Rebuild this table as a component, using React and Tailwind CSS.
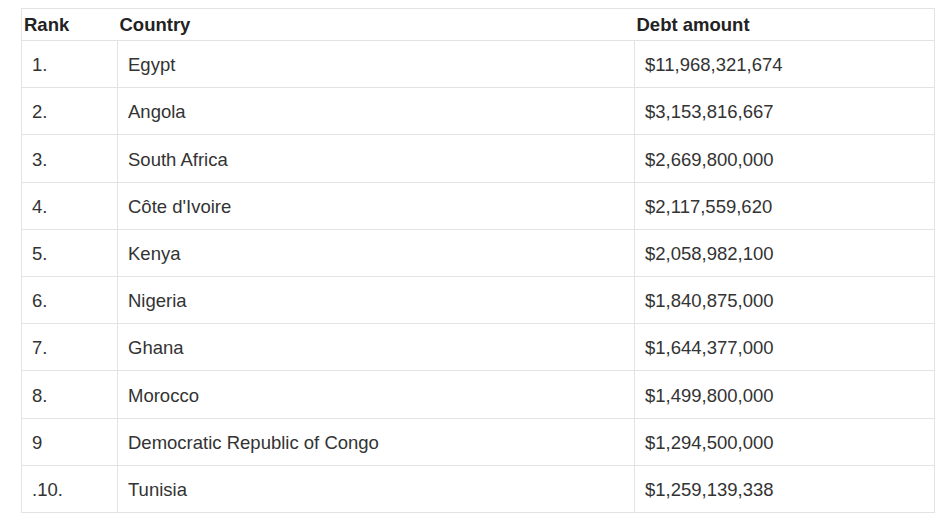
import React from "react";

const rows = [
  ["1.", "Egypt", "$11,968,321,674"],
  ["2.", "Angola", "$3,153,816,667"],
  ["3.", "South Africa", "$2,669,800,000"],
  ["4.", "Côte d'Ivoire", "$2,117,559,620"],
  ["5.", "Kenya", "$2,058,982,100"],
  ["6.", "Nigeria", "$1,840,875,000"],
  ["7.", "Ghana", "$1,644,377,000"],
  ["8.", "Morocco", "$1,499,800,000"],
  ["9", "Democratic Republic of Congo", "$1,294,500,000"],
  [".10.", "Tunisia", "$1,259,139,338"],
];

export default function App() {
  return (
    <div
      className="min-h-[517px] w-[940px] bg-white pl-[21px] pt-[8px] text-[18.5px] text-[#333]"
      style={{ fontFamily: '"Liberation Sans", Arial, sans-serif' }}
    >
      <table className="w-[914px] table-fixed border-collapse border border-[#e3e3e3]">
        <colgroup>
          <col className="w-[96px]" />
          <col className="w-[517px]" />
          <col />
        </colgroup>
        <thead>
          <tr className="h-[32px] border-b border-[#e3e3e3]">
            <th className="px-[2px] text-left font-bold text-[#222]">Rank</th>
            <th className="px-[2px] text-left font-bold text-[#222]">Country</th>
            <th className="px-[2px] text-left font-bold text-[#222]">Debt amount</th>
          </tr>
        </thead>
        <tbody>
          {rows.map(([rank, country, debt]) => (
            <tr key={rank} className="h-[47.2px] border-b border-[#e3e3e3]">
              <td className="border-r border-[#e3e3e3] pl-[10px] pt-[2px]">{rank}</td>
              <td className="border-r border-[#e3e3e3] pl-[10px] pt-[2px]">{country}</td>
              <td className="pl-[10px] pt-[2px]">{debt}</td>
            </tr>
          ))}
        </tbody>
      </table>
    </div>
  );
}
